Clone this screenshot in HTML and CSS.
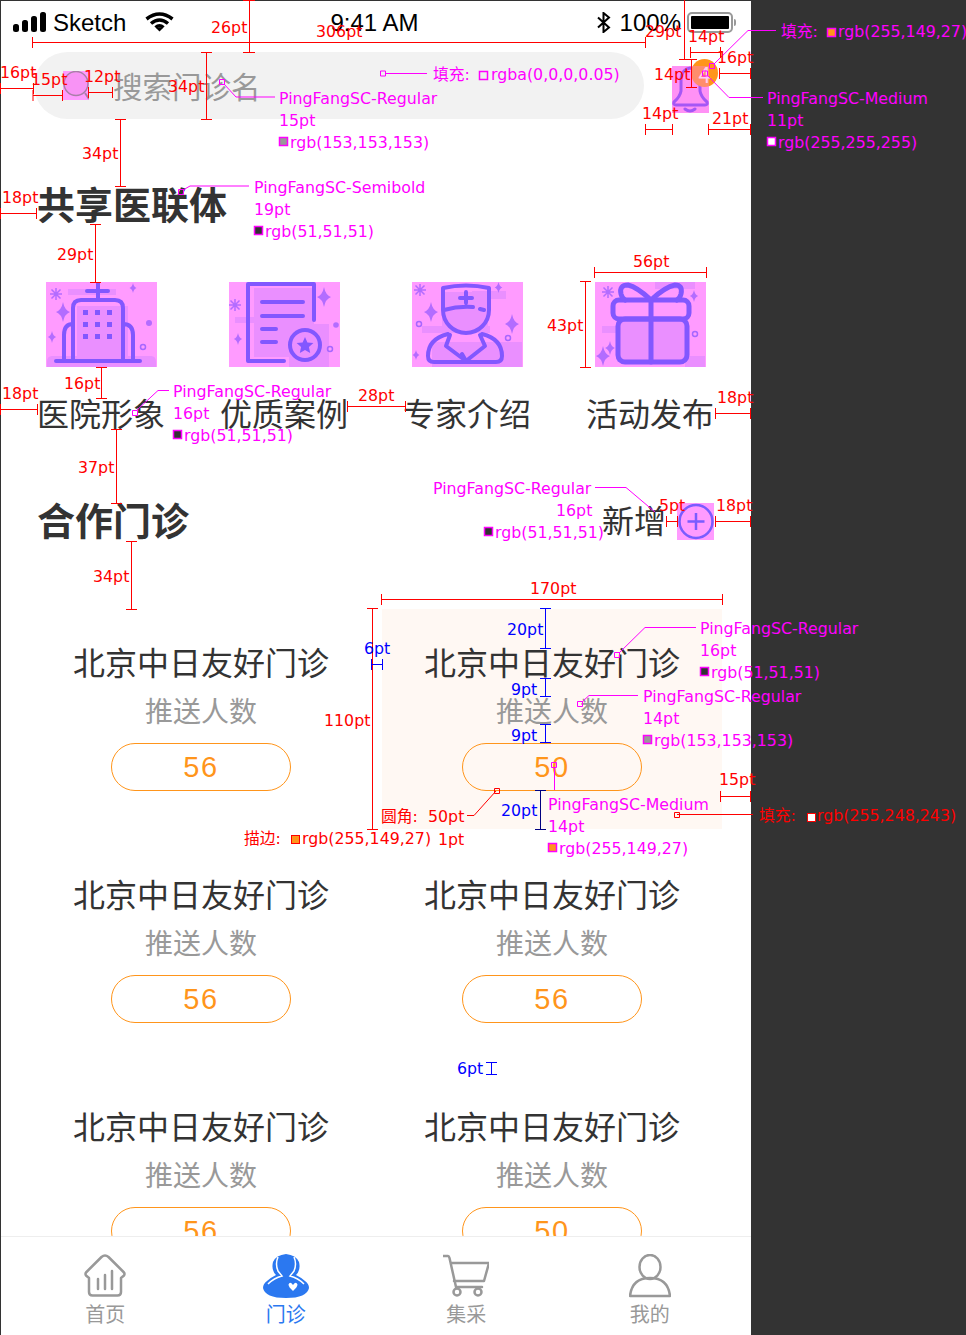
FILE: index.html
```html
<!DOCTYPE html>
<html lang="zh-CN">
<head>
  <meta charset="UTF-8" />
  <meta name="viewport" content="width=device-width, initial-scale=1" />
  <title>门诊标注</title>
  <link rel="stylesheet" href="styles.css">
</head>
<body>
<div class="stage">
  <svg width="0" height="0" class="defs">
    <symbol id="spark" viewBox="-10 -10 20 20" overflow="visible">
      <path d="M0-10Q1.5-2 7 0Q1.5 2 0 10Q-1.5 2-7 0Q-1.5-2 0-10Z" />
    </symbol>
    <symbol id="aster" viewBox="-10 -10 20 20" overflow="visible">
      <path d="M-6 0H6M0-6V6M-4.5-4.5L4.5 4.5M-4.5 4.5L4.5-4.5" />
    </symbol>
  </svg>

  <div class="phone">
    <div class="content">
      <div class="status">
        <div class="status-left">
          <svg class="signal" width="34" height="20" viewBox="0 0 34 20">
            <rect x="0" y="12" width="6" height="8" rx="2.5" />
            <rect x="9" y="8" width="6" height="12" rx="2.5" />
            <rect x="18" y="4" width="6" height="16" rx="2.5" />
            <rect x="27" y="0" width="6" height="20" rx="2.5" />
          </svg>
          <span class="carrier">Sketch</span>
          <svg class="wifi" width="29" height="20" viewBox="0 0 29 20">
            <path d="M1.5 7Q14.5-3 27.5 7M6 11.5Q14.5 4.5 23 11.5M10.5 15.5Q14.5 12 18.5 15.5" />
            <path class="wifi-dot" d="M11.5 16.5L14.5 19.5L17.5 16.5Q14.5 14 11.5 16.5Z" />
          </svg>
        </div>
        <span class="clock">9:41 AM</span>
        <div class="status-right">
          <svg class="bluetooth" width="14" height="21" viewBox="0 0 14 21">
            <path d="M1 5.5L12 15.5L6.5 20V1L12 5.5L1 15.5" />
          </svg>
          <span class="battery-text">100%</span>
          <div class="battery"><div class="battery-fill"></div></div>
          <div class="battery-nub"></div>
        </div>
      </div>

      <div class="search-row">
        <div class="search">
          <svg class="search-icon" width="26" height="29" viewBox="0 0 26 29">
            <rect class="pink" width="26" height="29" />
            <circle class="search-lens" cx="13" cy="12.5" r="12" />
            <path class="search-handle" d="M22 22L26 28" />
          </svg>
          <span class="search-text">搜索门诊名</span>
        </div>
        <div class="bell">
          <svg width="37" height="47" viewBox="0 0 37 47">
            <rect class="pink" width="37" height="47" />
            <path class="icon-line" d="M18 2Q10 3 9 13V25Q8 31 2 36Q1 39 4 39H33Q36 39 35 36Q29 31 28 25V13Q27 3 18 2Z" />
            <path class="icon-line" d="M13 43Q18 47 23 43" />
          </svg>
          <span class="bell-badge">4</span>
        </div>
      </div>

      <h2 class="section-title share-title">共享医联体</h2>

      <div class="tiles">
        <div class="tile">
          <svg class="tile-art" width="111" height="85" viewBox="0 0 111 85">
            <rect class="pink" width="111" height="85" />
            <path class="soft" d="M22 7H70V13H22ZM31 24H82V76H31ZM6 74H105Q110 74 110 80V85H1V80Q1 74 6 74Z" />
            <path class="icon-line" d="M52 1V18M41 9H62M27 79V26Q27 18 35 18H69Q77 18 77 26V79M27 42Q18 42 18 53V79M77 42Q87 42 87 53V79M10 79H94" />
            <path class="fill-purple" d="M37 28h5v5h-5zM49 28h5v5h-5zM61 28h5v5h-5zM37 40h5v5h-5zM49 40h5v5h-5zM61 40h5v5h-5zM37 52h5v5h-5zM49 52h5v5h-5zM61 52h5v5h-5z" />
            <use class="spark" href="#spark" x="7" y="20" width="20" height="20" />
            <use class="spark" href="#spark" x="0" y="49" width="12" height="12" />
            <use class="spark" href="#spark" x="82" y="1" width="10" height="10" />
            <use class="aster" href="#aster" x="0" y="2" width="20" height="20" />
            <circle class="dot" cx="103" cy="41" r="3" />
            <circle class="ring" cx="97" cy="65" r="2.5" />
          </svg>
          <span class="tile-label">医院形象</span>
        </div>
        <div class="tile">
          <svg class="tile-art" width="111" height="85" viewBox="0 0 111 85">
            <rect class="pink" width="111" height="85" />
            <path class="soft" d="M25 6H85V50H60V75H25ZM6 35H25V41H6ZM60 42H100V85H60Z" />
            <path class="icon-line" d="M85 38V2H19V79H55M33 20H74M33 34H74M33 47H47M33 60H47" />
            <circle class="icon-line" cx="76" cy="63" r="15" />
            <path class="fill-purple" d="M76 55l2.4 5.5 6 .6-4.5 4 1.3 6-5.2-3.1-5.2 3.1 1.3-6-4.5-4 6-.6z" />
            <use class="spark" href="#spark" x="85" y="5" width="20" height="20" />
            <use class="spark" href="#spark" x="3" y="51" width="12" height="12" />
            <use class="aster" href="#aster" x="-4" y="13" width="20" height="20" />
            <circle class="dot" cx="107" cy="43" r="2.8" />
            <circle class="ring" cx="101" cy="67" r="2.5" />
          </svg>
          <span class="tile-label">优质案例</span>
        </div>
        <div class="tile">
          <svg class="tile-art" width="111" height="85" viewBox="0 0 111 85">
            <rect class="pink" width="111" height="85" />
            <path class="soft" d="M60 9H94V17H60ZM10 44H78V51H10ZM30 10H76V48H30ZM20 60H110V85H20Z" />
            <path class="icon-line" d="M31 6Q54 1 77 6V28A23 23 0 0 1 31 28ZM32 28Q46 24 61 25M68 27L72 28M54 10V21M48 16H60" />
            <path class="icon-line" d="M36 52Q16 57 16 74Q16 80 22 80H84Q90 80 90 74Q90 57 70 52M38 53L34 64L54 79L73 64L68 53M54 79L50 72" />
            <use class="spark" href="#spark" x="9" y="20" width="20" height="20" />
            <use class="spark" href="#spark" x="90" y="32" width="20" height="20" />
            <use class="spark" href="#spark" x="81" y="0" width="11" height="11" />
            <use class="spark" href="#spark" x="-1" y="68" width="10" height="10" />
            <use class="aster" href="#aster" x="-2" y="-2" width="20" height="20" />
            <circle class="ring" cx="7" cy="42" r="2.5" />
            <circle class="ring" cx="96" cy="56" r="2.5" />
          </svg>
          <span class="tile-label">专家介绍</span>
        </div>
        <div class="tile">
          <svg class="tile-art" width="111" height="85" viewBox="0 0 111 85">
            <rect class="pink" width="111" height="85" />
            <path class="soft" d="M60 0H100V7H60ZM7 44H70V51H7ZM22 37H92V80H22ZM90 74H110V85H90Z" />
            <rect class="icon-line thick" x="18" y="18" width="76" height="19" rx="6" />
            <rect class="icon-line thick" x="23" y="37" width="69" height="43" rx="7" />
            <path class="icon-line thick" d="M56 18V80M56 18Q42 5 33 3Q24 3 26 12Q27 16 30 18M56 18Q70 5 80 3Q88 3 86 12Q85 16 82 18" />
            <use class="spark" href="#spark" x="-2" y="64" width="20" height="20" />
            <use class="spark" href="#spark" x="8" y="59" width="14" height="14" />
            <use class="spark" href="#spark" x="93" y="8" width="12" height="12" />
            <use class="aster" href="#aster" x="3" y="0" width="20" height="20" />
            <circle class="ring" cx="100" cy="52" r="2.5" />
          </svg>
          <span class="tile-label">活动发布</span>
        </div>
      </div>

      <div class="clinic-head">
        <h2 class="section-title">合作门诊</h2>
        <div class="add">
          <span class="add-text">新增</span>
          <svg width="37" height="37" viewBox="0 0 37 37">
            <rect class="pink" width="37" height="37" />
            <circle class="add-ring" cx="19" cy="18.5" r="16.5" />
            <path class="add-plus" d="M19 10V27M10.5 18.5H27.5" />
          </svg>
        </div>
      </div>

      <div class="cards">
        <div class="card">
          <span class="card-name">北京中日友好门诊</span>
          <span class="card-sub">推送人数</span>
          <span class="card-count">56</span>
        </div>
        <div class="card card-active">
          <span class="card-name">北京中日友好门诊</span>
          <span class="card-sub">推送人数</span>
          <span class="card-count">50</span>
        </div>
        <div class="card">
          <span class="card-name">北京中日友好门诊</span>
          <span class="card-sub">推送人数</span>
          <span class="card-count">56</span>
        </div>
        <div class="card">
          <span class="card-name">北京中日友好门诊</span>
          <span class="card-sub">推送人数</span>
          <span class="card-count">56</span>
        </div>
        <div class="card">
          <span class="card-name">北京中日友好门诊</span>
          <span class="card-sub">推送人数</span>
          <span class="card-count">56</span>
        </div>
        <div class="card">
          <span class="card-name">北京中日友好门诊</span>
          <span class="card-sub">推送人数</span>
          <span class="card-count">50</span>
        </div>
      </div>
    </div>

    <nav class="tabbar">
      <a class="tab">
        <svg width="44" height="44" viewBox="0 0 44 44">
          <path class="tab-line" d="M6 24L3 21.5Q2 20 3 18.5L18.5 3Q22 0 25.5 3L41 18.5Q42 20 41 21.5L38 24V38Q38 41.5 34.5 41.5H9.5Q6 41.5 6 38ZM15 25V35M22 21V35M29 17V35" />
        </svg>
        <span>首页</span>
      </a>
      <a class="tab tab-active">
        <svg width="46" height="44" viewBox="0 0 46 44">
          <path class="tab-fill" d="M23 0Q33 1 36 8Q38 16 33 21Q39 24 42 27Q46 30 46 34Q44 44 23 44Q2 44 0 34Q0 30 4 27Q7 24 13 21Q8 16 10 8Q13 1 23 0Z" />
          <path class="tab-cut" d="M15 3Q12 10 15 17L19 22Q11 24 5 30M31 3Q34 10 31 17L27 22Q35 24 41 30" />
          <path class="tab-heart" d="M30 31Q27 27 25.5 30.5Q25.5 33 30 37Q34.5 33 34.5 30.5Q33 27 30 31Z" />
        </svg>
        <span>门诊</span>
      </a>
      <a class="tab">
        <svg width="46" height="44" viewBox="0 0 46 44">
          <path class="tab-line" d="M0 2H5Q6 2 6.5 4L13 33H39M8 9H46L41 27H11" />
          <circle class="tab-line" cx="14" cy="38" r="3.5" />
          <circle class="tab-line" cx="35" cy="38" r="3.5" />
        </svg>
        <span>集采</span>
      </a>
      <a class="tab">
        <svg width="42" height="44" viewBox="0 0 42 44">
          <ellipse class="tab-line" cx="21" cy="13" rx="10.5" ry="12" />
          <path class="tab-line" d="M1 42Q3 24 21 24Q39 24 41 42Z" />
        </svg>
        <span>我的</span>
      </a>
    </nav>
  </div>

  <!-- разметка поверх макета -->
  <svg class="marks" width="966" height="1335" viewBox="0 0 966 1335">
    <g class="mag">
      <path d="M224 84L236 97H275M386 73.5H427M183 190L190 186H249M137 410L158 390.5H169M595 487.5H626L655 512M619 653L645 627.5H696M582 702L589 695.5H638M554.5 768V790M714 64L748 30.5H776M707 75L729 97.5H763" />
      <path class="box" d="M219.5 79.5h5v5h-5zM380.5 71h5v5h-5zM178.5 189.5h5v5h-5zM132.5 410.5h5v5h-5zM614.5 652.5h5v5h-5zM577.5 701.5h5v5h-5zM551.5 762.5h5v5h-5zM709.5 63.5h5v5h-5zM702.5 71h5v5h-5z" />
      <text x="279" y="104">PingFangSC-Regular</text>
      <text x="279" y="126">15pt</text>
      <rect class="sw-gray" x="279.5" y="137.5" width="8" height="8" />
      <text x="290" y="148">rgb(153,153,153)</text>
      <text x="433" y="80">填充:</text>
      <rect class="sw-none" x="479.5" y="71.5" width="8" height="8" />
      <text x="491" y="80">rgba(0,0,0,0.05)</text>
      <text x="254" y="193">PingFangSC-Semibold</text>
      <text x="254" y="215">19pt</text>
      <rect class="sw-dark" x="254.5" y="226.5" width="8" height="8" />
      <text x="265" y="237">rgb(51,51,51)</text>
      <text x="173" y="397">PingFangSC-Regular</text>
      <text x="173" y="419">16pt</text>
      <rect class="sw-dark" x="173.5" y="430.5" width="8" height="8" />
      <text x="184" y="441">rgb(51,51,51)</text>
      <text x="433" y="494">PingFangSC-Regular</text>
      <text x="556" y="516">16pt</text>
      <rect class="sw-dark" x="484.5" y="527.5" width="8" height="8" />
      <text x="495" y="538">rgb(51,51,51)</text>
      <text x="700" y="634">PingFangSC-Regular</text>
      <text x="700" y="656">16pt</text>
      <rect class="sw-dark" x="700.5" y="667.5" width="8" height="8" />
      <text x="711" y="678">rgb(51,51,51)</text>
      <text x="643" y="702">PingFangSC-Regular</text>
      <text x="643" y="724">14pt</text>
      <rect class="sw-gray" x="643.5" y="735.5" width="8" height="8" />
      <text x="654" y="746">rgb(153,153,153)</text>
      <text x="548" y="810">PingFangSC-Medium</text>
      <text x="548" y="832">14pt</text>
      <rect class="sw-orange" x="548.5" y="843.5" width="8" height="8" />
      <text x="559" y="854">rgb(255,149,27)</text>
      <text x="781" y="37">填充:</text>
      <rect class="sw-orange" x="827.5" y="28.5" width="8" height="8" />
      <text x="838" y="37">rgb(255,149,27)</text>
      <text x="767" y="104">PingFangSC-Medium</text>
      <text x="767" y="126">11pt</text>
      <rect class="sw-white" x="767.5" y="137.5" width="8" height="8" />
      <text x="778" y="148">rgb(255,255,255)</text>
    </g>

    <g class="red">
      <path d="M249.5 0V52M243 .5H255M243 52.5H255
        M32.5 42.5H645.5M32.5 37V48M645.5 37V48
        M0 88.5H33.5M.5 83V94M33.5 83V94
        M33 95.5H62.5M33 90V101M62.5 90V101
        M88.5 92.5H112.5M88.5 87V98M112.5 87V98
        M206.5 52V119M201 52.5H212M201 119.5H212
        M120.5 119V186M115 119.5H126M115 186.5H126
        M0 213.5H36.5M.5 208V219M36.5 208V219
        M95.5 224V282M90 224.5H101M90 282.5H101
        M101.5 367V398M96 367.5H107M96 398.5H107
        M0 409.5H37.5M.5 404V415M37.5 404V415
        M347.5 406.5H405.5M347.5 401V412M405.5 401V412
        M116.5 429V503M111 429.5H122M111 503.5H122
        M131.5 541V609M126 541.5H137M126 609.5H137
        M594.5 272.5H706.5M594.5 267V278M706.5 267V278
        M585.5 281V367M580 281.5H591M580 367.5H591
        M715.5 413.5H751M715.5 408V419M750.5 408V419
        M666.5 521.5H677.5M666.5 516V527M677.5 516V527
        M715.5 521.5H751M715.5 516V527M750.5 516V527
        M381.5 599.5H722.5M381.5 594V605M722.5 594V605
        M372.5 608V829M367 608.5H378M367 829.5H378
        M720.5 796.5H751M720.5 791V802M750.5 791V802
        M684.5 0V59M679 59.5H690
        M690.5 52.5H720.5M690.5 47V58M720.5 47V58
        M719.5 73.5H751M719.5 68V79M750.5 68V79
        M691.5 59V87M686 59.5H697M686 87.5H697
        M645.5 129.5H672.5M645.5 124V135M672.5 124V135
        M708.5 129.5H751M708.5 124V135M750.5 124V135
        M467 815.5H474L496 791M677 814.5H753" />
      <path class="box" d="M494.5 788.5h5v5h-5zM674.5 812.5h5v5h-5z" />
      <text x="211" y="33">26pt</text>
      <text x="316" y="37">306pt</text>
      <text x="645" y="37">29pt</text>
      <text x="688" y="42">14pt</text>
      <text x="717" y="63">16pt</text>
      <text x="654" y="80">14pt</text>
      <text x="642" y="119">14pt</text>
      <text x="712" y="124">21pt</text>
      <text x="0" y="78">16pt</text>
      <text x="31" y="85">15pt</text>
      <text x="84" y="82">12pt</text>
      <text x="168" y="92">34pt</text>
      <text x="82" y="159">34pt</text>
      <text x="2" y="203">18pt</text>
      <text x="57" y="260">29pt</text>
      <text x="64" y="389">16pt</text>
      <text x="2" y="399">18pt</text>
      <text x="358" y="401">28pt</text>
      <text x="78" y="473">37pt</text>
      <text x="93" y="582">34pt</text>
      <text x="633" y="267">56pt</text>
      <text x="547" y="331">43pt</text>
      <text x="717" y="403">18pt</text>
      <text x="659" y="511">5pt</text>
      <text x="716" y="511">18pt</text>
      <text x="530" y="594">170pt</text>
      <text x="324" y="726">110pt</text>
      <text x="719" y="785">15pt</text>
      <text x="381" y="822">圆角:</text>
      <text x="428" y="822">50pt</text>
      <text x="244" y="844">描边:</text>
      <rect class="sw-orange" x="291.5" y="835.5" width="8" height="8" />
      <text x="302" y="844">rgb(255,149,27)</text>
      <text x="438" y="845">1pt</text>
      <text x="759" y="821">填充:</text>
      <rect class="sw-white" x="807.5" y="813.5" width="8" height="8" />
      <text x="817" y="821">rgb(255,248,243)</text>
    </g>

    <g class="blue">
      <path d="M371.5 664.5H382.5M371.5 659V670M382.5 659V670
        M545.5 608V649M540 608.5H551M540 648.5H551
        M545.5 678V697M540 678.5H551M540 696.5H551
        M545.5 724V743M540 724.5H551M540 742.5H551
        M491.5 1062V1074M486 1062.5H497M486 1074.5H497" />
      <path class="dark-blue" d="M540.5 790V829M535 790.5H546M535 829.5H546" />
      <text x="364" y="654">6pt</text>
      <text x="507" y="635">20pt</text>
      <text x="511" y="695">9pt</text>
      <text x="511" y="741">9pt</text>
      <text x="501" y="816">20pt</text>
      <text x="457" y="1074">6pt</text>
    </g>
  </svg>
</div>
</body>
</html>
```

FILE: styles.css
```css
* {
  box-sizing: border-box;
}

body {
  margin: 0;
  background: #333;
  font-family: "Noto Sans CJK SC", "Liberation Sans", sans-serif;
  color: #333;
}

.stage {
  position: relative;
  width: 966px;
  height: 1335px;
  overflow: hidden;
  background: #333;
}

.defs {
  position: absolute;
}

.phone {
  width: 751px;
  height: 1335px;
  border-top: 1px solid #333;
  border-left: 1px solid #333;
  background: #fff;
  display: flex;
  flex-direction: column;
}

.content {
  flex: 1;
  min-height: 0;
  overflow: hidden;
}

/* статус-бар */
.status {
  height: 51px;
  padding: 0 15px 8px 12px;
  display: grid;
  grid-template-columns: 1fr auto 1fr;
  align-items: center;
  color: #000;
  font-family: "Liberation Sans", sans-serif;
  font-size: 24px;
}

.status-left,
.status-right {
  display: flex;
  align-items: center;
}

.status-right {
  justify-content: flex-end;
}

.signal {
  margin-top: -2px;
}

.signal rect {
  fill: #000;
}

.carrier {
  margin-left: 6px;
}

.wifi {
  margin-left: 19px;
  margin-top: -2px;
}

.wifi path {
  fill: none;
  stroke: #000;
  stroke-width: 3.5;
}

.wifi .wifi-dot {
  fill: #000;
  stroke: none;
}

.bluetooth {
  margin-right: 9px;
}

.bluetooth path {
  fill: none;
  stroke: #000;
  stroke-width: 2;
}

.battery {
  width: 46px;
  height: 21px;
  margin-left: 6px;
  padding: 2px;
  border: 2px solid #999;
  border-radius: 5px;
}

.battery-fill {
  height: 100%;
  background: #000;
  border-radius: 1px;
}

.battery-nub {
  width: 2px;
  height: 7px;
  margin-left: 1px;
  background: #999;
  border-radius: 0 2px 2px 0;
}

/* поиск */
.search-row {
  display: flex;
  padding-left: 33px;
  height: 67px;
}

.search {
  width: 610px;
  height: 67px;
  border-radius: 34px;
  background: #f2f2f2;
  display: flex;
  align-items: center;
  padding-left: 29px;
}

.search-icon {
  flex: none;
}

.pink {
  fill: #ff9bff;
}

.search-lens {
  fill: #f893f5;
  stroke: #a97fa8;
  stroke-width: 1.5;
}

.search-handle {
  stroke: #a97fa8;
  stroke-width: 2;
}

.search-text {
  margin-left: 24px;
  font-size: 29.5px;
  line-height: 67px;
  color: #999;
}

.bell {
  position: relative;
  width: 37px;
  height: 47px;
  margin: 14px 0 0 28px;
}

.bell svg {
  display: block;
}

.bell .icon-line {
  stroke: #6a3bff;
  stroke-width: 3;
}

.bell-badge {
  position: absolute;
  left: 19px;
  top: -7px;
  width: 27px;
  height: 28px;
  border-radius: 50%;
  background: #ff951b;
  color: #fff;
  font-size: 22px;
  line-height: 28px;
  text-align: center;
}

/* розовая заливка иконки лежит поверх бейджа */
.bell::after {
  content: "";
  position: absolute;
  inset: 0;
  background: rgba(255, 130, 230, .4);
}

/* блоки */
.section-title {
  margin: 0;
  padding-left: 36px;
  font-size: 38px;
  font-weight: 700;
  line-height: 46px;
}

.share-title {
  margin-top: 61px;
}

.tiles {
  margin-top: 56px;
  padding-left: 37px;
  display: grid;
  grid-template-columns: repeat(4, 126px);
  column-gap: 57px;
}

.tile {
  display: flex;
  flex-direction: column;
  align-items: center;
}

.tile-art {
  display: block;
}

.tile-label {
  margin-top: 22px;
  font-size: 32px;
  line-height: 46px;
  white-space: nowrap;
}

.icon-line {
  fill: none;
  stroke: #8257ff;
  stroke-width: 4;
  stroke-linecap: round;
  stroke-linejoin: round;
}

.thick {
  stroke-width: 5;
}

.soft {
  fill: #ea8fff;
}

.fill-purple {
  fill: #8257ff;
}

.dot {
  fill: #b36cff;
}

.spark {
  fill: #b36cff;
}

.aster {
  fill: none;
  stroke: #b36cff;
  stroke-width: 1.5;
}

.ring {
  fill: none;
  stroke: #a767ff;
  stroke-width: 1.5;
}

.clinic-head {
  margin-top: 61px;
  padding-right: 37px;
  display: flex;
  align-items: center;
  justify-content: space-between;
}

.add {
  display: flex;
  align-items: center;
}

.add svg {
  display: block;
  margin-top: 5px;
}

.add-text {
  margin-right: 11px;
  font-size: 32px;
  line-height: 46px;
}

.add-ring,
.add-plus {
  fill: none;
  stroke: #7a5cff;
  stroke-width: 2.5;
}

/* карточки */
.cards {
  margin-top: 67px;
  padding-left: 30px;
  display: grid;
  grid-template-columns: repeat(2, 340px);
  grid-auto-rows: 220px;
  column-gap: 11px;
  row-gap: 12px;
}

.card {
  display: flex;
  flex-direction: column;
  align-items: center;
  padding-top: 29px;
}

.card-active {
  background: #fff8f3;
}

.card-name {
  font-size: 32px;
  line-height: 46px;
  white-space: nowrap;
}

.card-sub {
  margin-top: 6px;
  font-size: 28px;
  line-height: 40px;
  color: #999;
}

.card-count {
  width: 180px;
  height: 48px;
  margin-top: 13px;
  border: 1px solid #ff951b;
  border-radius: 24px;
  font-family: "Liberation Sans", sans-serif;
  font-size: 29px;
  line-height: 46px;
  letter-spacing: 1.5px;
  text-align: center;
  color: #ff951b;
}

/* нижнее меню */
.tabbar {
  height: 99px;
  border-top: 1px solid #eee;
  background: #fff;
  display: flex;
  flex: none;
  padding-top: 17px;
}

.tab {
  display: flex;
  flex-direction: column;
  align-items: center;
  width: 180.5px;
  font-size: 20px;
  line-height: 28px;
  color: #999;
  text-decoration: none;
  gap: 2px;
}

.tab:first-child {
  margin-left: 14px;
}

.tab:last-child {
  margin-left: 3px;
}

.tab svg {
  display: block;
}

.tab-active {
  color: #2b78f0;
}

.tab-line {
  fill: none;
  stroke: #999;
  stroke-width: 2.5;
  stroke-linejoin: round;
  stroke-linecap: round;
}

.tab-fill {
  fill: #2b78f0;
}

.tab-cut {
  fill: none;
  stroke: #fff;
  stroke-width: 1.5;
}

.tab-heart {
  fill: #fff;
}

/* слой разметки */
.marks {
  position: absolute;
  left: 0;
  top: 0;
  pointer-events: none;
  font-family: "DejaVu Sans", "Noto Sans CJK SC", sans-serif;
  font-size: 15.8px;
}

.marks path {
  fill: none;
  stroke-width: 1;
}

.mag path {
  stroke: #f0f;
}

.mag text {
  fill: #f0f;
}

.red path {
  stroke: #f00;
}

.red text {
  fill: #f00;
}

.blue path {
  stroke: #00f;
}

.blue text {
  fill: #00f;
}

.blue .dark-blue {
  stroke: #000080;
}

.mag rect {
  stroke: #f0f;
  stroke-width: 1.5;
}

.red rect {
  stroke: #f00;
  stroke-width: 1;
}

.sw-gray {
  fill: #999;
}

.sw-none {
  fill: #eee;
}

.sw-dark {
  fill: #333;
}

.sw-orange {
  fill: #ff951b;
}

.sw-white {
  fill: #fff;
}
```
